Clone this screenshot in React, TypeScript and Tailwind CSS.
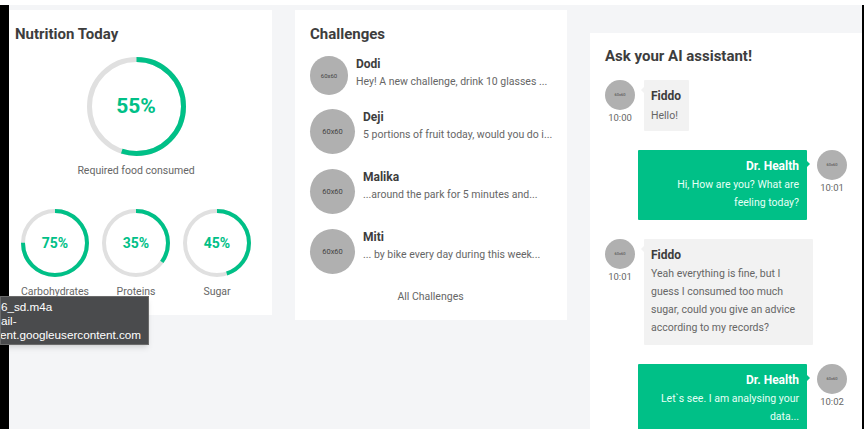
import React from 'react';

const GREEN = '#00c087';

// Progress ring drawn clockwise from 12 o'clock, label sits over the middle
const Ring = ({ value, size, stroke, textClass }: { value: number; size: number; stroke: number; textClass: string }) => {
  const r = (size - stroke) / 2;
  const c = 2 * Math.PI * r;
  return (
    <div className="relative" style={{ width: size, height: size }}>
      <svg width={size} height={size} className="-rotate-90 block">
        <circle cx={size / 2} cy={size / 2} r={r} fill="none" stroke="#e0e0e0" strokeWidth={stroke} />
        <circle
          cx={size / 2}
          cy={size / 2}
          r={r}
          fill="none"
          stroke={GREEN}
          strokeWidth={stroke}
          strokeDasharray={`${(c * value) / 100} ${c}`}
        />
      </svg>
      <div className={`absolute inset-0 flex items-center justify-center font-bold text-[#00c087] ${textClass}`}>
        {value}%
      </div>
    </div>
  );
};

const SmallRing = ({ value, label }: { value: number; label: string }) => (
  <div className="w-[68px] flex flex-col items-center">
    <Ring value={value} size={68} stroke={4} textClass="text-[14px]" />
    <div className="mt-[8px] text-[10.5px] leading-[14px] text-[#666] whitespace-nowrap">{label}</div>
  </div>
);

const Avatar = ({ size, textClass }: { size: string; textClass: string }) => (
  <div className={`${size} ${textClass} shrink-0 rounded-full bg-[#b0b0b0] text-[#444] flex items-center justify-center`}>
    60x60
  </div>
);

const challenges = [
  { name: 'Dodi', text: 'Hey! A new challenge, drink 10 glasses ...', small: true, mt: 'mt-[12px]' },
  { name: 'Deji', text: '5 portions of fruit today, would you do i...', small: false, mt: 'mt-[14px]' },
  { name: 'Malika', text: '...around the park for 5 minutes and...', small: false, mt: 'mt-[15px]' },
  { name: 'Miti', text: '... by bike every day during this week...', small: false, mt: 'mt-[15px]' },
];

const ChallengeRow = ({ name, text, small, mt }: (typeof challenges)[number]) => (
  <div className={`flex gap-2 ${mt}`}>
    <Avatar size={small ? 'w-[38px] h-[39px]' : 'w-[45px] h-[45px]'} textClass={small ? 'text-[6px]' : 'text-[7.5px]'} />
    <div className="min-w-0">
      <div className="text-[12px] leading-[16px] font-bold text-[#3d3d3d]">{name}</div>
      <div className="mt-[1px] text-[10.5px] leading-[18px] text-[#666] whitespace-nowrap">{text}</div>
    </div>
  </div>
);

const FiddoMessage = ({ time, children, bubble }: { time: string; children: React.ReactNode; bubble: string }) => (
  <div className="flex">
    <div className="w-[30px] flex flex-col items-center shrink-0">
      <Avatar size="w-[30px] h-[30px]" textClass="text-[4px]" />
      <div className="mt-[1px] text-[9.5px] leading-[14px] text-[#666]">{time}</div>
    </div>
    <div className={`relative ml-[9px] bg-[#f2f2f2] rounded-[1px] px-[7px] pt-[8px] ${bubble}`}>
      <div className="absolute left-[-3px] top-[7px] w-0 h-0 border-y-[3px] border-y-transparent border-r-[3px] border-r-[#f2f2f2]" />
      <div className="text-[12px] leading-[16px] font-bold text-[#3d3d3d]">Fiddo</div>
      {children}
    </div>
  </div>
);

const HealthMessage = ({ time, children, bubble }: { time: string; children: React.ReactNode; bubble: string }) => (
  <div className="flex justify-end pr-[15px]">
    <div className={`relative mr-[10px] bg-[#00c087] rounded-[1px] pl-2 pr-[8px] pt-[8px] text-right text-white ${bubble}`}>
      <div className="absolute right-[-3px] top-[11px] w-0 h-0 border-y-[3px] border-y-transparent border-l-[3px] border-l-[#00c087]" />
      <div className="text-[12px] leading-[16px] font-bold">Dr. Health</div>
      {children}
    </div>
    <div className="w-[30px] flex flex-col items-center shrink-0">
      <Avatar size="w-[30px] h-[30px]" textClass="text-[4px]" />
      <div className="mt-[1px] text-[9.5px] leading-[14px] text-[#666]">{time}</div>
    </div>
  </div>
);

export default function App() {
  return (
    <div
      className="relative h-[429px] w-[864px] overflow-hidden bg-white pt-[5px] flex"
      style={{ fontFamily: 'Roboto, "Liberation Sans", sans-serif' }}
    >
      <div className="w-[9px] bg-black shrink-0" />

      <div className="flex-1 bg-[#f4f5f7] pt-[5px] flex items-start gap-[23px]">
        {/* Nutrition */}
        <div className="w-[263px] h-[305px] bg-white pl-[6px] shrink-0">
          <h2 className="mt-[14px] text-[15px] leading-[20px] font-bold text-[#3d3d3d]">Nutrition Today</h2>
          <div className="flex flex-col items-center pr-[15px]">
            <div className="mt-[13px]">
              <Ring value={55} size={99} stroke={5} textClass="text-[21px]" />
            </div>
            <div className="mt-[7px] text-[10.5px] leading-[16px] text-[#666]">Required food consumed</div>
          </div>
          <div className="mt-[30px] ml-[6px] flex gap-[13px]">
            <SmallRing value={75} label="Carbohydrates" />
            <SmallRing value={35} label="Proteins" />
            <SmallRing value={45} label="Sugar" />
          </div>
        </div>

        {/* Challenges */}
        <div className="w-[272px] h-[310px] bg-white pl-[15px] shrink-0">
          <h2 className="mt-[14px] text-[15px] leading-[20px] font-bold text-[#3d3d3d]">Challenges</h2>
          {challenges.map((c) => (
            <ChallengeRow key={c.name} {...c} />
          ))}
          <div className="mt-[15px] pr-[16px] text-center text-[10.5px] leading-[16px] text-[#666]">All Challenges</div>
        </div>

        {/* Assistant */}
        <div className="mt-[23px] h-[396px] flex-1 bg-white pt-[13px] overflow-hidden">
          <h2 className="pl-[15px] text-[15px] leading-[20px] font-bold text-[#3d3d3d]">Ask your AI assistant!</h2>
          <div className="mt-[14px] flex flex-col gap-[19px]">
            <div className="pl-[15px]">
              <FiddoMessage time="10:00" bubble="w-[45px] h-[51px]">
                <div className="mt-[3px] text-[10.5px] leading-[18px] text-[#666]">Hello!</div>
              </FiddoMessage>
            </div>
            <HealthMessage time="10:01" bubble="w-[169px] h-[70px]">
              <div className="mt-[2px] text-[10.5px] leading-[18px] text-[#e6fff6]">Hi, How are you? What are feeling today?</div>
            </HealthMessage>
            <div className="pl-[15px]">
              <FiddoMessage time="10:01" bubble="w-[169px] h-[106px]">
                <div className="mt-[2px] text-[10.5px] leading-[18px] text-[#666]">
                  Yeah everything is fine, but I guess I consumed too much sugar, could you give an advice according to my records?
                </div>
              </FiddoMessage>
            </div>
            <HealthMessage time="10:02" bubble="w-[169px] h-[70px]">
              <div className="mt-[2px] text-[10.5px] leading-[18px] text-[#e6fff6]">Let`s see. I am analysing your data...</div>
            </HealthMessage>
          </div>
        </div>
      </div>

      <div className="w-[2px] bg-black shrink-0" />

      {/* Browser status tooltip lying over the page */}
      <div
        className="absolute left-0 top-[296px] w-[149px] h-[49px] bg-[#4a4b4d] border border-[#6a6a6a] shadow-md text-white text-[11.7px] leading-[14px] whitespace-nowrap overflow-hidden flex flex-col items-end pt-[3px] pr-[7px]"
        style={{ fontFamily: '"Liberation Sans", Arial, sans-serif' }}
      >
        <div className="self-start">6_sd.m4a</div>
        <div className="self-start">ail-</div>
        <div>ent.googleusercontent.com</div>
      </div>
    </div>
  );
}
